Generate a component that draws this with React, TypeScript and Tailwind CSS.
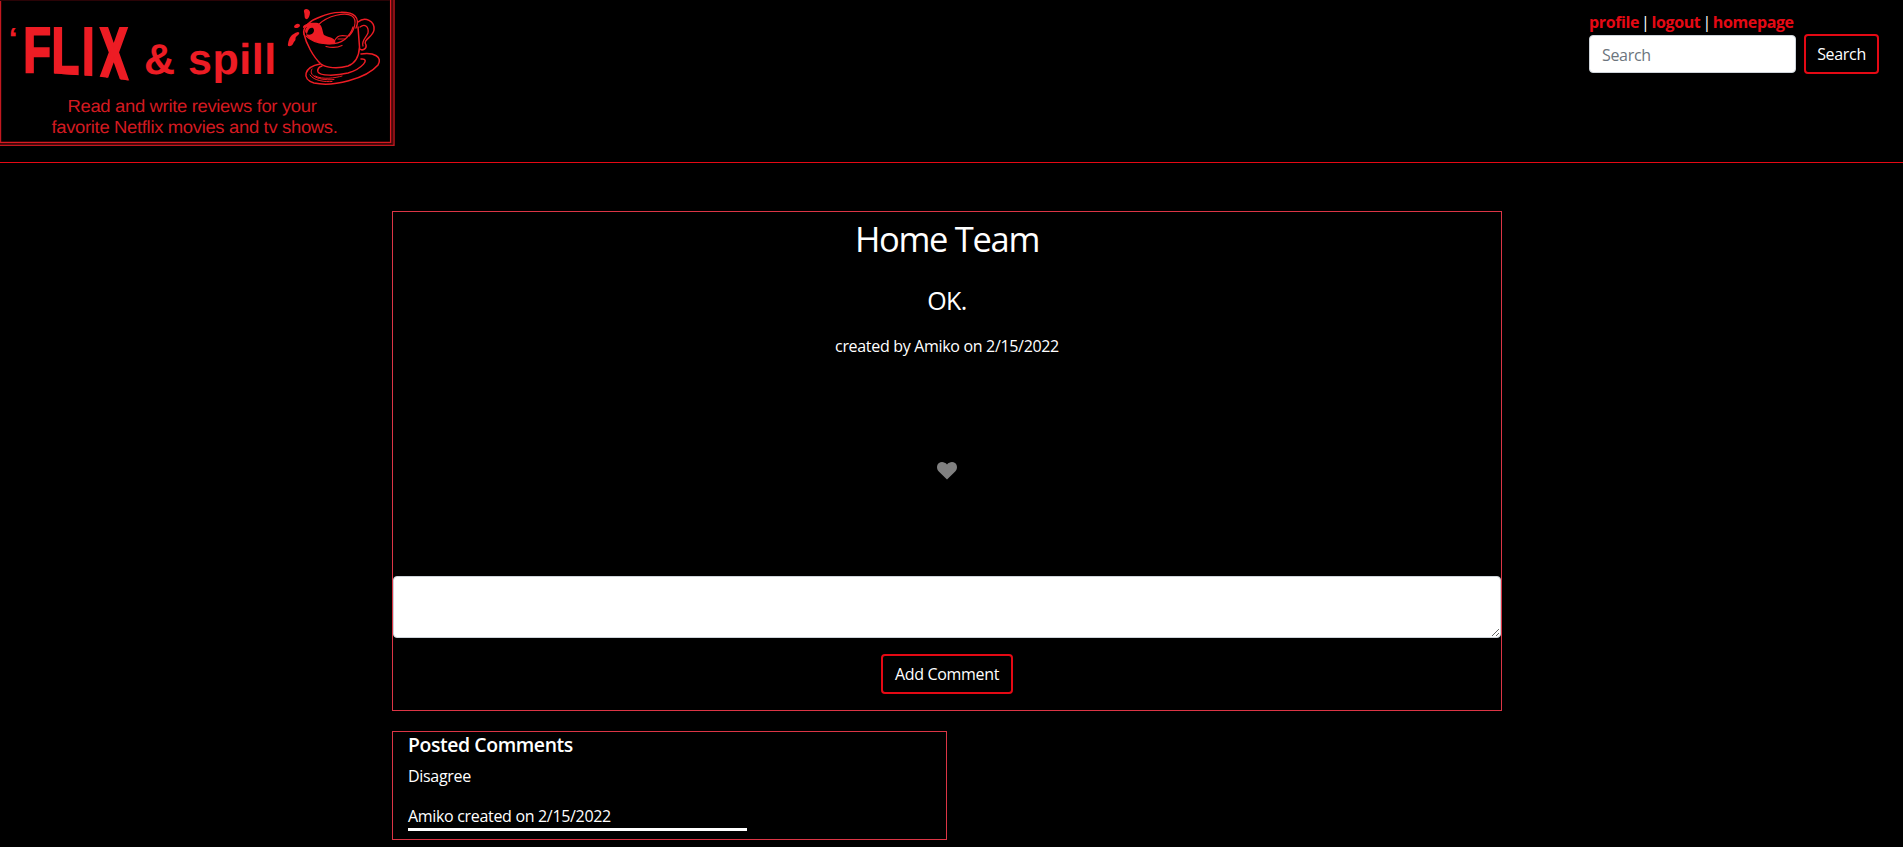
const link = "font-bold text-[#e50914] no-underline";

function Cup() {
  return (
    <g fill="none" stroke="#ed1c24" strokeWidth="1.5" strokeLinecap="round" strokeLinejoin="round">
      <path d="M304 34 C306 43 313 57 321 64 C326 68 338 69 348 66 C356 63 359 56 359.5 47 L358 27" />
      <path d="M318 25 C328 15 346 12 352 16 C358 20 354 31 349 36" strokeWidth="1.2" />
      <path d="M304 34 C302 27 311 20 320 17 C333 11 350 11 355 16 C358 19 358 24 356 28" />
      <path d="M306 36 C315 45 336 46 344 40 C349 36 352 31 353 27" strokeWidth="1.2" />
      <path d="M358 22 C365 16 375 21 374 30 C373 37 362 40 366 45 C367 49 362 51 360 49" />
      <path d="M360 27 C365 23 369 27 368 33 C366 38 361 41 363 46" strokeWidth="1.3" />
      <path d="M326 46.5 C332 48 337 48 342 45.5" strokeWidth="1.2" />
      <path d="M361 54 C374 52 383 57 378 65 C366 79 333 87 314 83 C301 79 304 67 320 64" />
      <path d="M361 59 C371 58 362 69 348 73 C336 76 320 76 318 72 C317 69 319 67 322 66" />
      <path d="M312 69 C307 77 323 81 334 79.5 M315 76 C323 80 335 78 342 76 M310 75 C314 81 325 82 332 81.5" strokeWidth="1" />
      <path d="M303 28 C302 24 311 22 318 23 C323 26 322 31 324 35 C330 38 334 37 335.5 42 C335 45 326 45 317 42 C311 40 308 38 306 34 C312 37 316 31 313 28 C309 27 308 31 307 34 C304 32 305 29 307 27 Z" fill="#ed1c24" stroke="none" />
      <path d="M334 42 C337 35 341 35 347 36 M338 39 L345 39" strokeWidth="1.2" />
      <path d="M304 12 C303 8 309 8 310 12 C310 16 308 20 306 19 C304 18 305 15 304 12 Z M294 27 C294 24 300 22 300 26 C299 28 295 29 294 27 Z M288 44 C289 38 291 34 298 32 C302 33 296 36 295.5 38 C296 41 294 41 293 44 C291 47 287 47 288 44 Z" fill="#ed1c24" stroke="none" />
    </g>
  );
}

function Logo() {
  return (
    <svg className="block h-[146px] w-[395px]" viewBox="0 0 395 146" fontFamily="'Liberation Sans', Arial, sans-serif" fill="#ed1c24" textRendering="geometricPrecision">
      <clipPath id="slant">
        <path d="M20 27 H135 V81.2 L98 76.6 L50 73.3 L20 73.2 Z" />
      </clipPath>
      <path d="M0.5 0 V142 M394 0 V145.3 H0" fill="none" stroke="#c2181f" strokeWidth="1.4" />
      <path d="M390.7 0 V142.5 H0" fill="none" stroke="#d81a21" strokeWidth="1.5" />
      <path d="M392.5 0 V144 H0" fill="none" stroke="#4a080b" strokeWidth="1" />
      <path d="M0 0.5 H390" stroke="#2a0306" />
      <text x="8.5" y="48" fontSize="29" fontWeight="700" textLength="9" lengthAdjust="spacingAndGlyphs">‘</text>
      <g clipPath="url(#slant)" fontWeight="700" fontSize="66" stroke="#ed1c24" strokeWidth="2.6">
        <text transform="translate(23.6 73) scale(.68 1.02)">F</text>
        <text transform="translate(51.8 75) scale(.68 1.06)">L</text>
        <text transform="translate(82.2 77) scale(.66 1.11)">I</text>
        <text transform="translate(98.8 81) scale(.68 1.2)">X</text>
      </g>
      <text x="144" y="74" fontSize="43" fontWeight="700" textLength="132">&amp; spill</text>
      <text x="67.5" y="112" fontSize="17.6" fill="#d31a20" textLength="249" lengthAdjust="spacingAndGlyphs">Read and write reviews for your</text>
      <text x="51.5" y="133.3" fontSize="17.6" fill="#d31a20" textLength="286" lengthAdjust="spacingAndGlyphs">favorite Netflix movies and tv shows.</text>
      <Cup />
    </svg>
  );
}

export default function App() {
  return (
    <div className="h-[847px] overflow-hidden bg-black font-['Open_Sans','Noto_Sans',sans-serif] text-base leading-6 tracking-[-0.32px] text-white">
      <header className="flex h-[163px] items-start justify-between border-b border-[#e50914] pr-6">
        <Logo />
        <div className="pt-2.5">
          <nav className="flex h-6 gap-[2px] whitespace-nowrap tracking-[-0.38px]">
            <a className={link} href="#profile">profile</a>
            <span>|</span>
            <a className={link} href="#logout">logout</a>
            <span>|</span>
            <a className={link} href="#homepage">homepage</a>
          </nav>
          <form className="flex items-center gap-2">
            <input className="h-[38px] w-[207px] rounded border border-[#ced4da] bg-white px-3 pt-0.5 text-black placeholder:text-[#6c757d]" placeholder="Search" />
            <button type="button" className="h-10 w-[75px] rounded border-2 border-[#e50914]">Search</button>
          </form>
        </div>
      </header>

      <main className="ml-[392px] mt-12 w-[1110px]">
        <section className="flex h-[500px] flex-col items-center border border-[#dc3545]">
          <h1 className="mt-[7px] h-10 text-[34.5px] leading-10 tracking-[-1.3px]">Home Team</h1>
          <h2 className="mt-[26px] text-[25px] leading-[30px] tracking-[-0.6px]">OK.</h2>
          <p className="mt-[19px]">created by Amiko on 2/15/2022</p>
          <svg className="mt-[104px] block h-[18px] w-5" viewBox="0 0 20 18" fill="#808080">
            <path d="M10 17.6 L1.8 9.5 C-.8 6.7-.4 2.9 2 1.1 C4.5-.7 7.7.1 10 2.5 C12.3.1 15.5-.7 18 1.1 C20.4 2.9 20.8 6.7 18.2 9.5 Z" />
          </svg>
          <textarea className="mt-24 block h-[62px] w-full shrink-0 rounded border border-[#ced4da] bg-white px-3 py-1.5 text-black" />
          <button type="button" className="mt-4 h-10 w-[132px] shrink-0 rounded border-2 border-[#e50914]">Add Comment</button>
        </section>

        <section className="mt-5 h-[109px] w-[555px] border border-[#dc3545] px-[15px]">
          <h3 className="mt-px text-[19.4px] font-semibold leading-6 tracking-[-0.4px]">Posted Comments</h3>
          <p className="mt-[7px]">Disagree</p>
          <p className="mt-4 h-[27px] w-[339px] border-b-[3px] border-white">Amiko created on 2/15/2022</p>
        </section>
      </main>
    </div>
  );
}
